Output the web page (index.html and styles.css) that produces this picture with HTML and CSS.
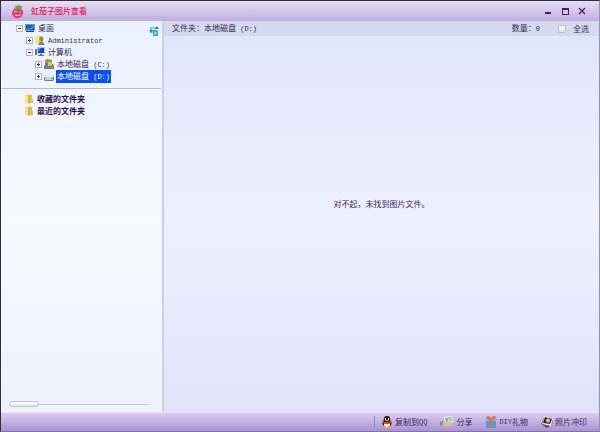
FILE: index.html
```
<!DOCTYPE html>
<html lang="zh-CN">
<head>
  <meta charset="UTF-8" />
  <meta name="viewport" content="width=device-width, initial-scale=1.0" />
  <title>虹茄子图片查看</title>
  <link rel="stylesheet" href="styles.css">
</head>
<body>
  <header class="titlebar">
    <svg class="logo" viewBox="0 0 12 15">
      <path d="M1 6Q3 3 8 4Q12 6 11 10Q9 15 4 14Q0 13 0 9Z" fill="#e23a70"/>
      <path d="M2 4L4 3L3 1L6 2L7 0L8 2L11 2L9 4L10 6L7 5L4 6Z" fill="#69a542"/>
      <path d="M2 8Q4 6 5 8M7 8Q8 7 9 8M3 11Q6 13 9 10" stroke="#ffd0dc" fill="none"/>
    </svg>
    <h1>虹茄子图片查看</h1>
    <div class="window-btns">
      <button type="button" aria-label="最小化"><svg viewBox="0 0 8 8"><path d="M1 5H7V7H1Z"/></svg></button>
      <button type="button" aria-label="最大化"><svg viewBox="0 0 8 8"><path d="M1 1H8V8H1ZM2 3V7H7V3Z" fill-rule="evenodd"/></svg></button>
      <button type="button" aria-label="关闭"><svg viewBox="0 0 8 8"><path d="M1 1L7 7M7 1L1 7" stroke="#40205e" stroke-width="1.3"/></svg></button>
    </div>
  </header>

  <main class="content">
    <nav class="sidebar">
      <button type="button" class="refresh" aria-label="刷新">
        <svg viewBox="0 0 10 10"><path d="M1 1H7V3H5V7H1Z" fill="#7cc4ec"/><path d="M4 4H8L9 6V10H4Z" fill="#4aa3dc"/><path d="M0 4L2 7L4 4ZM6 3L8 0L10 3Z" fill="#2b86cf"/><path d="M5 8Q7 8 7 6M3 3H5" stroke="#e4f5ff" fill="none"/></svg>
      </button>
      <ul class="tree">
        <li>
          <div class="node">
            <button type="button" class="toggle open" aria-label="折叠"></button>
            <svg class="icon" viewBox="0 0 10 10"><path d="M0 1H10V8H0Z" fill="#7194bd"/><path d="M1 2H9V7H1Z" fill="#1764b5"/><path d="M1 6Q5 6 9 2V4Q6 7 1 7Z" fill="#4a9bd9"/><path d="M1 8H9V9H1Z" fill="#34465f"/></svg>
            <a href="#">桌面</a>
          </div>
          <ul>
            <li>
              <div class="node">
                <button type="button" class="toggle" aria-label="展开"></button>
                <svg class="icon" viewBox="0 0 10 10"><path d="M0 1L4 0V10L0 9Z" fill="#f7e58b"/><path d="M4 1H8V9H4Z" fill="#d9bd55"/><circle cx="6.5" cy="4" r="2" fill="#a87952"/><path d="M3 10Q6 3 10 10Z" fill="#5b9080"/></svg>
                <a href="#"><span class="latin">Administrator</span></a>
              </div>
            </li>
            <li>
              <div class="node">
                <button type="button" class="toggle open" aria-label="折叠"></button>
                <svg class="icon" viewBox="0 0 10 10"><path d="M0 2H2V8H0Z" fill="#68768c"/><path d="M2 0H10V7H2Z" fill="#b4c4dc"/><path d="M3 1H9V6H3Z" fill="#1742b5"/><path d="M3 1H6L3 5Z" fill="#5397e8"/><path d="M5 7H7V8H9V9H3V8H5Z" fill="#657086"/></svg>
                <a href="#">计算机</a>
              </div>
              <ul>
                <li>
                  <div class="node">
                    <button type="button" class="toggle" aria-label="展开"></button>
                    <svg class="icon" viewBox="0 0 10 10"><path d="M0 7L2 5H9L10 7V10H0Z" fill="#71808c"/><path d="M1 1L4 0V3L1 4Z" fill="#e66931"/><path d="M4 0L8 1V4L4 3Z" fill="#72b33d"/><path d="M1 4L4 3V7L1 7Z" fill="#3587d7"/><path d="M4 3L8 4V7L4 7Z" fill="#eac03a"/><path d="M7 8H9V9H7Z" fill="#50d05d"/></svg>
                    <a href="#">本地磁盘<span class="latin"> (C:)</span></a>
                  </div>
                </li>
                <li>
                  <div class="node">
                    <button type="button" class="toggle" aria-label="展开"></button>
                    <svg class="icon" viewBox="0 0 10 10"><path d="M0 6L2 4H8L10 6V9L9 10H1L0 9Z" fill="#777c82"/><path d="M0 6L2 4H8L10 6Z" fill="#e8e9ec"/><path d="M1 6H9V9H1Z" fill="#cfd2d5"/><path d="M7 7H9V8H7Z" fill="#3fae42"/></svg>
                    <a href="#" class="selected">本地磁盘<span class="latin"> (D:)</span></a>
                  </div>
                </li>
              </ul>
            </li>
          </ul>
        </li>
      </ul>
      <ul class="shortcuts">
        <li>
          <svg class="icon" viewBox="0 0 10 10"><path d="M1 1L5 0V10L1 9Z" fill="#f5e48c"/><path d="M4 1H8V5H9V9H4Z" fill="#dcc05a"/><path d="M5 1V10" stroke="#b99b3e" stroke-width=".6"/></svg>
          <a href="#">收藏的文件夹</a>
        </li>
        <li>
          <svg class="icon" viewBox="0 0 10 10"><path d="M1 1L5 0V10L1 9Z" fill="#f5e48c"/><path d="M4 1H8V5H9V9H4Z" fill="#dcc05a"/><path d="M5 1V10" stroke="#b99b3e" stroke-width=".6"/></svg>
          <a href="#">最近的文件夹</a>
        </li>
      </ul>
      <input type="range" class="zoom-slider" aria-label="缩略图大小" min="0" max="100" value="0">
    </nav>

    <section class="viewer">
      <div class="pathbar">
        <span class="path">文件夹：本地磁盘<span class="latin"> (D:)</span></span>
        <span class="count">数量：<span class="latin">0</span></span>
        <label class="select-all"><input type="checkbox"> 全选</label>
      </div>
      <p class="empty">对不起，未找到图片文件。</p>
    </section>
  </main>

  <footer class="toolbar">
    <button type="button">
      <svg viewBox="0 0 12 12"><path d="M3 11H10V12H3Z" fill="#9583b0"/><ellipse cx="6" cy="7" rx="4.5" ry="4" fill="#181923"/><ellipse cx="6" cy="8.5" rx="3" ry="3" fill="#f4f3f3"/><circle cx="6" cy="3.2" r="3.2" fill="#15161d"/><path d="M4 2H5V4H4ZM7 2H8V4H7Z" fill="#fff"/><path d="M4 4H8L6 5.5Z" fill="#f0b72b"/><path d="M2 5Q6 7 10 5V7Q6 9 2 7Z" fill="#df3029"/><path d="M2 10H5V12H2ZM7 10H10V12H7Z" fill="#e7a72c"/></svg>
      复制到<span class="latin">QQ</span>
    </button>
    <button type="button" class="share">
      <svg viewBox="0 0 14 12"><path d="M4 1L12 0L13 6L5 7Z" fill="#f6f8fb"/><path d="M5 2L11 1L12 5L6 6Z" fill="#63afd8"/><circle cx="9" cy="3.5" r="1.5" fill="#f3d269"/><path d="M0 6L4 5L8 7L14 6L10 10H4L0 9Z" fill="#e8bd76"/><path d="M0 6L3 5V9L0 10Z" fill="#7990b3"/></svg>
      分享
    </button>
    <button type="button">
      <svg viewBox="0 0 12 12"><path d="M1 4H11V12H1Z" fill="#4c9fdb"/><path d="M0 3H12V5H0Z" fill="#77bceb"/><path d="M5 3H7V12H5Z" fill="#ed6c38"/><path d="M6 3Q1 3 2 1Q4 0 6 3Q8 0 10 1Q11 3 6 3Z" fill="none" stroke="#ea6135" stroke-width="1.3"/></svg>
      <span class="latin">DIY</span>礼物
    </button>
    <button type="button">
      <svg viewBox="0 0 12 12"><path d="M0 8L3 2L12 4L11 9L6 12Z" fill="#555064"/><path d="M4 0L12 3L10 10L1 8Z" fill="#f3eee9"/><path d="M4 1L11 3L9 8L2 7Z" fill="#342630"/><circle cx="7" cy="4.5" r="2" fill="#efbb9d"/><path d="M4 7Q7 5 9 8Z" fill="#d54c4d"/></svg>
      照片冲印
    </button>
  </footer>
</body>
</html>
```
FILE: styles.css
```
* {
  box-sizing: border-box;
}
body {
  margin: 0;
  min-height: 100vh;
  display: flex;
  flex-direction: column;
  border: 1px solid #332d3b;
  border-right-color: #9a8fae;
  border-bottom-color: #82759a;
  font-family: "Noto Sans CJK SC", sans-serif;
  font-size: 8px;
  line-height: 12px;
  color: #412457;
}
button {
  padding: 0;
  border: 0;
  background: none;
  font: inherit;
  color: inherit;
  cursor: pointer;
}
a {
  color: inherit;
  text-decoration: none;
}
ul {
  list-style: none;
  margin: 0;
  padding: 0;
}
svg {
  display: block;
  flex: none;
}
.latin {
  font-family: "Liberation Mono", monospace;
  font-size: 7px;
  white-space: pre;
}

.titlebar {
  height: 20px;
  display: flex;
  align-items: center;
  padding: 0 13px 0 11px;
  background: linear-gradient(#e8def4, #bfaee0);
}
.logo {
  width: 12px;
  height: 15px;
}
.titlebar h1 {
  margin: 0 auto 0 7px;
  font-size: 8px;
  font-weight: 500;
  color: #e3174f;
}
.window-btns {
  display: flex;
  gap: 9px;
}
.window-btns svg {
  width: 8px;
  height: 8px;
  fill: #40205e;
}

.content {
  flex: 1;
  display: flex;
}
.sidebar {
  position: relative;
  width: 163px;
  flex: none;
  display: flex;
  flex-direction: column;
  padding-top: 1px;
  border-right: 2px solid #cbd0e3;
  background: linear-gradient(#eaf2fe, #f8f9ff 50%, #eff1fe);
}
.refresh {
  position: absolute;
  top: 5px;
  right: 3px;
}
.refresh svg,
.icon {
  width: 10px;
  height: 10px;
}
.tree {
  padding-left: 15px;
}
.tree ul {
  padding-left: 10px;
}
.tree ul ul {
  padding-left: 9px;
}
.node {
  height: 12px;
  display: flex;
  align-items: center;
  gap: 2px;
}
.node a {
  padding: 0 1px;
  white-space: nowrap;
}
.node .selected {
  background: #0b50ee;
  color: #fff;
}
.toggle {
  width: 7px;
  height: 7px;
  flex: none;
  border: 1px solid #b5b2c0;
  background:
    linear-gradient(#40304d, #40304d) center / 3px 1px no-repeat,
    linear-gradient(#40304d, #40304d) center / 1px 3px no-repeat,
    #fff;
}
.toggle.open {
  background: linear-gradient(#40304d, #40304d) center / 3px 1px no-repeat #fff;
}
.shortcuts {
  margin: 6px 1px 0;
  padding: 4px 0 0 22px;
  border-top: 1px solid #b9b9c2;
  font-weight: bold;
  color: #2c0d4c;
}
.shortcuts li {
  display: flex;
  align-items: center;
  gap: 3px;
}
.zoom-slider {
  appearance: none;
  height: 6px;
  margin: auto 12px 5px 8px;
  background: linear-gradient(#c9cad5, #c9cad5) center / 100% 1px no-repeat;
}
.zoom-slider::-webkit-slider-thumb {
  appearance: none;
  width: 30px;
  height: 6px;
  border: 1px solid #c2c3cd;
  border-radius: 3px;
  background: linear-gradient(#fff, #e4e3e3);
}

.viewer {
  flex: 1;
  display: flex;
  flex-direction: column;
  background: linear-gradient(#dfe5fa, #eef1fd 50%, #dfe4fa);
}
.pathbar {
  height: 15px;
  display: flex;
  align-items: center;
  padding: 0 10px 0 8px;
  background: #d3daed;
}
.count {
  margin-left: auto;
}
.select-all {
  display: flex;
  align-items: center;
  gap: 7px;
  margin-left: 18px;
}
.select-all input {
  appearance: none;
  width: 8px;
  height: 8px;
  margin: 0;
  border: 1px solid #bcbec8;
  border-radius: 1px;
  background: linear-gradient(#fff, #e5e5e8);
}
.select-all input:checked {
  background: #0b50ee;
}
.empty {
  margin: auto;
  padding-bottom: 40px;
}

.toolbar {
  height: 19px;
  display: flex;
  align-items: center;
  justify-content: flex-end;
  gap: 13px;
  padding-right: 12px;
  border-top: 1px solid #eae3f6;
  background: linear-gradient(#d9cdef, #a893d4);
}
.toolbar button {
  display: flex;
  align-items: center;
}
.toolbar button:first-child {
  padding-left: 6px;
  border-left: 1px solid #9483b8;
}
.toolbar svg {
  width: 12px;
  height: 12px;
  margin-right: 2px;
}
.toolbar .share svg {
  width: 14px;
}
```
